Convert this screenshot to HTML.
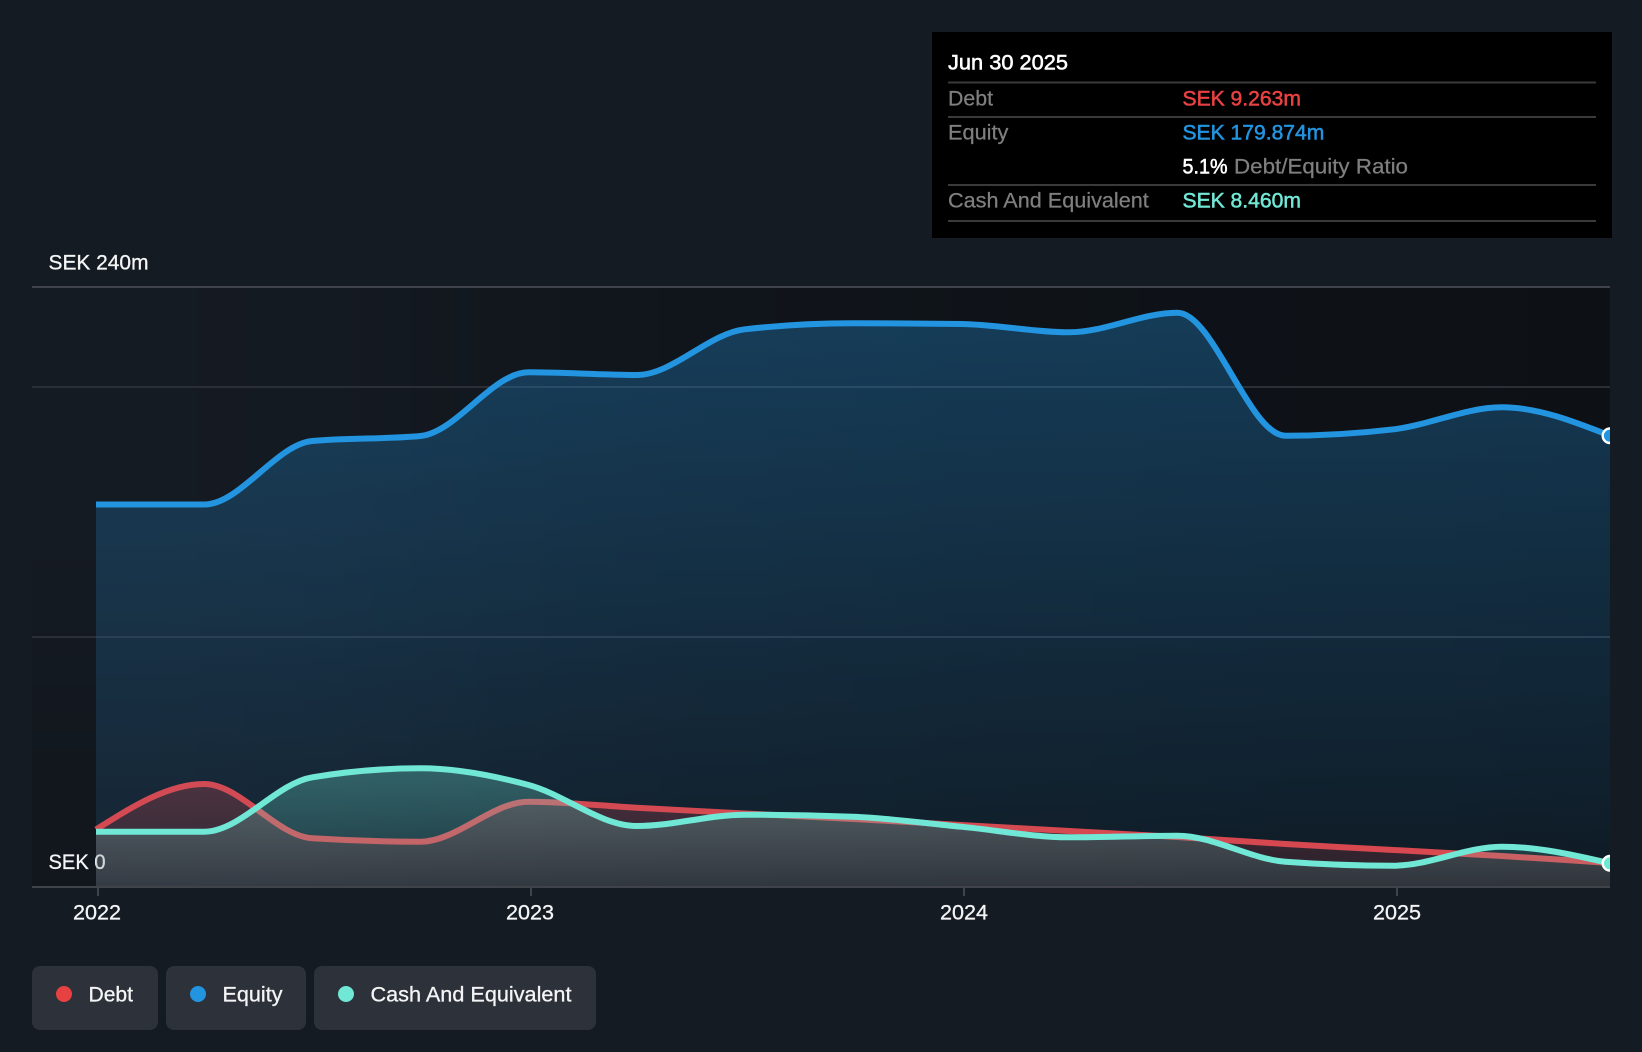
<!DOCTYPE html>
<html lang="en">
<head>
<meta charset="utf-8">
<title>Debt to Equity History</title>
<style>
html,body{margin:0;padding:0;background:#151b23;width:1642px;height:1052px;overflow:hidden}
svg{display:block;position:absolute;left:0;top:0}
text{font-family:"Liberation Sans",sans-serif;font-size:21.5px}
.w{fill:#f4f5f6;stroke:#f4f5f6;stroke-width:.3}
.g{fill:#7f7f7f;stroke:#7f7f7f;stroke-width:.25}
.m{stroke-width:.55}
</style>
</head>
<body>
<svg width="1642" height="1052" viewBox="0 0 1642 1052" xmlns="http://www.w3.org/2000/svg">
<defs>
<linearGradient id="dark" gradientUnits="userSpaceOnUse" x1="32" y1="0" x2="1610" y2="0">
<stop offset="0" stop-color="#000" stop-opacity="0"/>
<stop offset=".17" stop-color="#000" stop-opacity=".03"/>
<stop offset=".36" stop-color="#000" stop-opacity=".2"/>
<stop offset=".62" stop-color="#000" stop-opacity=".3"/>
<stop offset="1" stop-color="#000" stop-opacity=".37"/>
</linearGradient>
<linearGradient id="darkL" gradientUnits="userSpaceOnUse" x1="0" y1="287" x2="0" y2="887">
<stop offset="0" stop-color="#000" stop-opacity="0"/>
<stop offset=".4" stop-color="#000" stop-opacity="0"/>
<stop offset=".8" stop-color="#000" stop-opacity=".14"/>
<stop offset="1" stop-color="#000" stop-opacity=".17"/>
</linearGradient>
<linearGradient id="fe" gradientUnits="userSpaceOnUse" x1="0" y1="312" x2="0" y2="887">
<stop offset="0" stop-color="#2394df" stop-opacity=".32"/>
<stop offset="1" stop-color="#2394df" stop-opacity=".07"/>
</linearGradient>
<linearGradient id="fd" gradientUnits="userSpaceOnUse" x1="0" y1="784" x2="0" y2="887">
<stop offset="0" stop-color="#e84142" stop-opacity=".28"/>
<stop offset="1" stop-color="#e84142" stop-opacity=".12"/>
</linearGradient>
<linearGradient id="fc" gradientUnits="userSpaceOnUse" x1="0" y1="768" x2="0" y2="887">
<stop offset="0" stop-color="#71e7d6" stop-opacity=".31"/>
<stop offset="1" stop-color="#71e7d6" stop-opacity=".1"/>
</linearGradient>
<clipPath id="plot"><rect x="32" y="280" width="1578" height="607"/></clipPath>
</defs>

<!-- plot background -->
<rect x="32" y="287" width="1578" height="600" fill="url(#dark)"/>
<rect x="32" y="287" width="64" height="600" fill="url(#darkL)"/>

<!-- grid -->
<rect x="32" y="286" width="1578" height="2" fill="#40434a"/>
<rect x="32" y="386" width="1578" height="2" fill="#2b2e35"/>
<rect x="32" y="636" width="1578" height="2" fill="#2b2e35"/>

<!-- axis labels -->
<text class="w" x="48.5" y="269.5" textLength="100" lengthAdjust="spacingAndGlyphs">SEK 240m</text>
<text class="w" x="48.5" y="869" textLength="57" lengthAdjust="spacingAndGlyphs">SEK 0</text>

<g clip-path="url(#plot)">
<!-- debt -->
<path fill="url(#fd)" d="M96 829.5C132 806.75 168.1 784 204.1 784C240.2 784 276.2 836.03 312.3 838.3C348.3 840.57 384.4 841.7 420.4 841.7C456.4 841.7 492.6 801.7 528.6 801.7C564.6 801.7 600.7 805.73 636.7 807.7C672.7 809.67 708.8 811.62 744.8 813.5C780.8 815.38 817 817.08 853 819C889 820.92 925.1 823 961.1 825C997.1 827 1033.3 829 1069.3 831C1105.3 833 1141.4 834.83 1177.4 837C1213.4 839.17 1249.5 841.83 1285.5 844C1321.5 846.17 1357.7 848 1393.7 850C1429.7 852 1465.8 853.83 1501.8 856C1537.8 858.17 1574 860.58 1610 863L1610 887L96 887Z"/>
<path fill="none" stroke="#e84142" stroke-width="6" d="M96 829.5C132 806.75 168.1 784 204.1 784C240.2 784 276.2 836.03 312.3 838.3C348.3 840.57 384.4 841.7 420.4 841.7C456.4 841.7 492.6 801.7 528.6 801.7C564.6 801.7 600.7 805.73 636.7 807.7C672.7 809.67 708.8 811.62 744.8 813.5C780.8 815.38 817 817.08 853 819C889 820.92 925.1 823 961.1 825C997.1 827 1033.3 829 1069.3 831C1105.3 833 1141.4 834.83 1177.4 837C1213.4 839.17 1249.5 841.83 1285.5 844C1321.5 846.17 1357.7 848 1393.7 850C1429.7 852 1465.8 853.83 1501.8 856C1537.8 858.17 1574 860.58 1610 863"/>
<!-- equity -->
<path fill="url(#fe)" d="M96 504.5C132 504.5 168 504.5 204.1 504.5C240.2 504.5 276.2 444.33 312.3 441C348.3 437.67 384.4 439.33 420.4 436C456.4 432.67 492.6 372.3 528.6 372.3C564.6 372.3 600.7 375 636.7 375C672.7 375 708.8 333.3 744.8 329.3C780.8 325.3 817 323.3 853 323.3C889 323.3 925.1 323.53 961.1 324C997.1 324.47 1033.3 332.3 1069.3 332.3C1105.3 332.3 1141.4 312.7 1177.4 312.7C1213.4 312.7 1249.5 435.7 1285.5 435.7C1321.5 435.7 1357.7 433.57 1393.7 429.3C1429.7 425.03 1465.8 407.3 1501.8 407.3C1537.8 407.3 1574 421.5 1610 435.7L1610 887L96 887Z"/>
<path fill="none" stroke="#2394df" stroke-width="6" d="M96 504.5C132 504.5 168 504.5 204.1 504.5C240.2 504.5 276.2 444.33 312.3 441C348.3 437.67 384.4 439.33 420.4 436C456.4 432.67 492.6 372.3 528.6 372.3C564.6 372.3 600.7 375 636.7 375C672.7 375 708.8 333.3 744.8 329.3C780.8 325.3 817 323.3 853 323.3C889 323.3 925.1 323.53 961.1 324C997.1 324.47 1033.3 332.3 1069.3 332.3C1105.3 332.3 1141.4 312.7 1177.4 312.7C1213.4 312.7 1249.5 435.7 1285.5 435.7C1321.5 435.7 1357.7 433.57 1393.7 429.3C1429.7 425.03 1465.8 407.3 1501.8 407.3C1537.8 407.3 1574 421.5 1610 435.7"/>
<!-- cash -->
<path fill="url(#fc)" d="M96 831.7C132 831.7 168.1 831.7 204.1 831.7C240.2 831.7 276.2 783.3 312.3 777.3C348.3 771.3 384.4 768.3 420.4 768.3C456.4 768.3 492.6 775.38 528.6 785C564.6 794.62 600.7 826 636.7 826C672.7 826 708.8 814.7 744.8 814.7C780.8 814.7 817 815.37 853 816.7C889 818.03 925.1 823.27 961.1 826.7C997.1 830.13 1033.3 837.3 1069.3 837.3C1105.3 837.3 1141.4 835.7 1177.4 835.7C1213.4 835.7 1249.5 859.03 1285.5 861.7C1321.5 864.37 1357.7 865.7 1393.7 865.7C1429.7 865.7 1465.8 846.7 1501.8 846.7C1537.8 846.7 1574 855 1610 863.3L1610 887L96 887Z"/>
<path fill="none" stroke="#71e7d6" stroke-width="6" d="M96 831.7C132 831.7 168.1 831.7 204.1 831.7C240.2 831.7 276.2 783.3 312.3 777.3C348.3 771.3 384.4 768.3 420.4 768.3C456.4 768.3 492.6 775.38 528.6 785C564.6 794.62 600.7 826 636.7 826C672.7 826 708.8 814.7 744.8 814.7C780.8 814.7 817 815.37 853 816.7C889 818.03 925.1 823.27 961.1 826.7C997.1 830.13 1033.3 837.3 1069.3 837.3C1105.3 837.3 1141.4 835.7 1177.4 835.7C1213.4 835.7 1249.5 859.03 1285.5 861.7C1321.5 864.37 1357.7 865.7 1393.7 865.7C1429.7 865.7 1465.8 846.7 1501.8 846.7C1537.8 846.7 1574 855 1610 863.3"/>
<!-- end markers -->
<circle cx="1610" cy="435.7" r="7.3" fill="#2394df" stroke="#fff" stroke-width="2.4"/>
<circle cx="1610" cy="863.3" r="7.3" fill="#71e7d6" stroke="#fff" stroke-width="2.4"/>
</g>

<!-- x axis -->
<rect x="32" y="886" width="1578" height="2" fill="#40434a"/>
<rect x="97" y="887" width="2" height="9" fill="#40434a"/>
<rect x="530" y="887" width="2" height="9" fill="#40434a"/>
<rect x="963" y="887" width="2" height="9" fill="#40434a"/>
<rect x="1396" y="887" width="2" height="9" fill="#40434a"/>
<text class="w" x="73" y="919.5" textLength="48" lengthAdjust="spacingAndGlyphs">2022</text>
<text class="w" x="506" y="919.5" textLength="48" lengthAdjust="spacingAndGlyphs">2023</text>
<text class="w" x="940" y="919.5" textLength="48" lengthAdjust="spacingAndGlyphs">2024</text>
<text class="w" x="1373" y="919.5" textLength="48" lengthAdjust="spacingAndGlyphs">2025</text>

<!-- tooltip -->
<rect x="932" y="32" width="680" height="206" fill="#000"/>
<rect x="948" y="81.5" width="648" height="2" fill="#3a3a3a"/>
<rect x="948" y="116" width="648" height="2" fill="#3a3a3a"/>
<rect x="948" y="184" width="648" height="2" fill="#3a3a3a"/>
<rect x="948" y="220" width="648" height="2" fill="#3a3a3a"/>
<text class="w m" style="fill:#fff;stroke:#fff" x="948" y="69.5" textLength="120" lengthAdjust="spacingAndGlyphs">Jun 30 2025</text>
<text class="g" x="948" y="105.5" textLength="45" lengthAdjust="spacingAndGlyphs">Debt</text>
<text class="m" fill="#e84142" stroke="#e84142" x="1182.5" y="105.5" textLength="118.4" lengthAdjust="spacingAndGlyphs">SEK 9.263m</text>
<text class="g" x="948" y="139.5" textLength="60.4" lengthAdjust="spacingAndGlyphs">Equity</text>
<text class="m" fill="#2394df" stroke="#2394df" x="1182.5" y="139.5" textLength="141.8" lengthAdjust="spacingAndGlyphs">SEK 179.874m</text>
<text class="m" fill="#fff" stroke="#fff" x="1182.5" y="173.5" textLength="45" lengthAdjust="spacingAndGlyphs">5.1%</text>
<text class="g" x="1234" y="173.5" textLength="174" lengthAdjust="spacingAndGlyphs">Debt/Equity Ratio</text>
<text class="g" x="948" y="207.5" textLength="200.8" lengthAdjust="spacingAndGlyphs">Cash And Equivalent</text>
<text class="m" fill="#71e7d6" stroke="#71e7d6" x="1182.5" y="207.5" textLength="118.4" lengthAdjust="spacingAndGlyphs">SEK 8.460m</text>

<!-- legend -->
<rect x="32" y="966" width="126" height="64" rx="8" fill="#2d3139"/>
<rect x="166" y="966" width="140" height="64" rx="8" fill="#2d3139"/>
<rect x="314" y="966" width="282" height="64" rx="8" fill="#2d3139"/>
<circle cx="64" cy="994" r="8" fill="#e84142"/>
<circle cx="198" cy="994" r="8" fill="#2394df"/>
<circle cx="346" cy="994" r="8" fill="#71e7d6"/>
<text class="w" x="88.5" y="1001.5" textLength="44.5" lengthAdjust="spacingAndGlyphs">Debt</text>
<text class="w" x="222.5" y="1001.5" textLength="60" lengthAdjust="spacingAndGlyphs">Equity</text>
<text class="w" x="370.5" y="1001.5" textLength="201" lengthAdjust="spacingAndGlyphs">Cash And Equivalent</text>
</svg>
</body>
</html>
